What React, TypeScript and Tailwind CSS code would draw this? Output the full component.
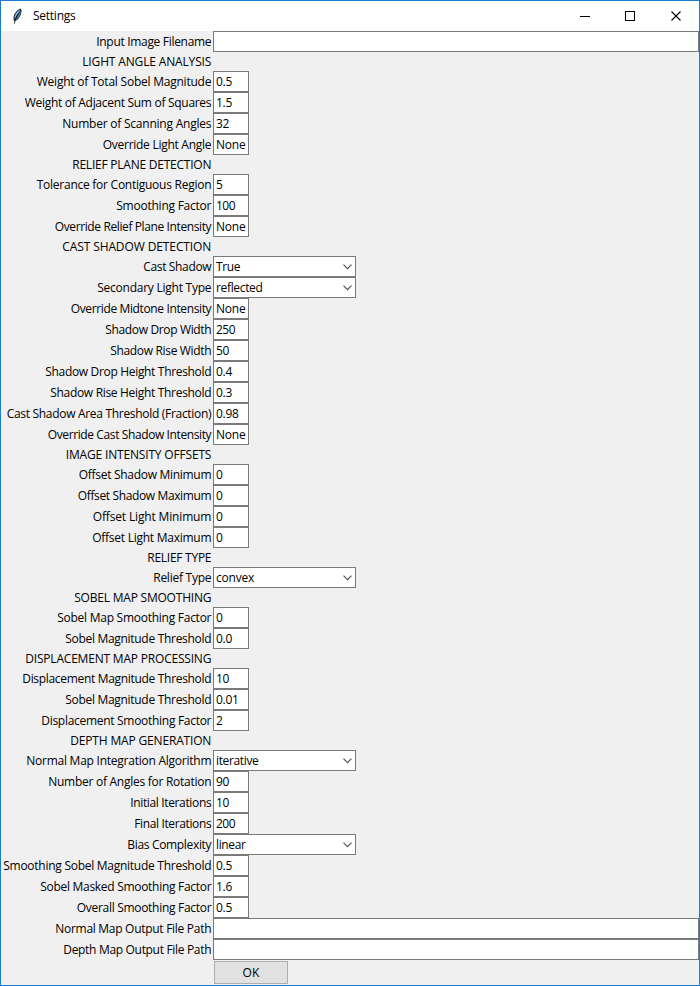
import { useLayoutEffect, useRef, useState } from "react";

type Kind = "heading" | "entry" | "select" | "path";
type Row = { kind: Kind; label: string; w: number; value?: string; vw?: number };

const rows: Row[] = [
  { kind: "path", label: "Input Image Filename", w: 115 },
  { kind: "heading", label: "LIGHT ANGLE ANALYSIS", w: 129 },
  { kind: "entry", label: "Weight of Total Sobel Magnitude", w: 174.5, value: "0.5", vw: 16 },
  { kind: "entry", label: "Weight of Adjacent Sum of Squares", w: 186.5, value: "1.5", vw: 16 },
  { kind: "entry", label: "Number of Scanning Angles", w: 149, value: "32", vw: 13 },
  { kind: "entry", label: "Override Light Angle", w: 108.5, value: "None", vw: 29.5 },
  { kind: "heading", label: "RELIEF PLANE DETECTION", w: 139 },
  { kind: "entry", label: "Tolerance for Contiguous Region", w: 174.5, value: "5", vw: 7 },
  { kind: "entry", label: "Smoothing Factor", w: 95, value: "100", vw: 19 },
  { kind: "entry", label: "Override Relief Plane Intensity", w: 156.5, value: "None", vw: 29.5 },
  { kind: "heading", label: "CAST SHADOW DETECTION", w: 149 },
  { kind: "select", label: "Cast Shadow", w: 68, value: "True", vw: 24 },
  { kind: "select", label: "Secondary Light Type", w: 114, value: "reflected", vw: 46.5 },
  { kind: "entry", label: "Override Midtone Intensity", w: 140.5, value: "None", vw: 29.5 },
  { kind: "entry", label: "Shadow Drop Width", w: 106, value: "250", vw: 19 },
  { kind: "entry", label: "Shadow Rise Width", w: 101, value: "50", vw: 13 },
  { kind: "entry", label: "Shadow Drop Height Threshold", w: 166, value: "0.4", vw: 16 },
  { kind: "entry", label: "Shadow Rise Height Threshold", w: 161, value: "0.3", vw: 16 },
  { kind: "entry", label: "Cast Shadow Area Threshold (Fraction)", w: 204.5, value: "0.98", vw: 22.5 },
  { kind: "entry", label: "Override Cast Shadow Intensity", w: 163.5, value: "None", vw: 29.5 },
  { kind: "heading", label: "IMAGE INTENSITY OFFSETS", w: 145.5 },
  { kind: "entry", label: "Offset Shadow Minimum", w: 132.5, value: "0", vw: 7 },
  { kind: "entry", label: "Offset Shadow Maximum", w: 133.5, value: "0", vw: 7 },
  { kind: "entry", label: "Offset Light Minimum", w: 118.5, value: "0", vw: 7 },
  { kind: "entry", label: "Offset Light Maximum", w: 119, value: "0", vw: 7 },
  { kind: "heading", label: "RELIEF TYPE", w: 64 },
  { kind: "select", label: "Relief Type", w: 58, value: "convex", vw: 38 },
  { kind: "heading", label: "SOBEL MAP SMOOTHING", w: 137 },
  { kind: "entry", label: "Sobel Map Smoothing Factor", w: 154, value: "0", vw: 7 },
  { kind: "entry", label: "Sobel Magnitude Threshold", w: 146, value: "0.0", vw: 16 },
  { kind: "heading", label: "DISPLACEMENT MAP PROCESSING", w: 186 },
  { kind: "entry", label: "Displacement Magnitude Threshold", w: 189, value: "10", vw: 13 },
  { kind: "entry", label: "Sobel Magnitude Threshold", w: 146, value: "0.01", vw: 22.5 },
  { kind: "entry", label: "Displacement Smoothing Factor", w: 170, value: "2", vw: 7 },
  { kind: "heading", label: "DEPTH MAP GENERATION", w: 141 },
  { kind: "select", label: "Normal Map Integration Algorithm", w: 185, value: "iterative", vw: 42.5 },
  { kind: "entry", label: "Number of Angles for Rotation", w: 163, value: "90", vw: 13 },
  { kind: "entry", label: "Initial Iterations", w: 81, value: "10", vw: 13 },
  { kind: "entry", label: "Final Iterations", w: 77, value: "200", vw: 19 },
  { kind: "select", label: "Bias Complexity", w: 84, value: "linear", vw: 29.5 },
  { kind: "entry", label: "Smoothing Sobel Magnitude Threshold", w: 208, value: "0.5", vw: 16 },
  { kind: "entry", label: "Sobel Masked Smoothing Factor", w: 171, value: "1.6", vw: 16 },
  { kind: "entry", label: "Overall Smoothing Factor", w: 134.5, value: "0.5", vw: 16 },
  { kind: "path", label: "Normal Map Output File Path", w: 156 },
  { kind: "path", label: "Depth Map Output File Path", w: 148 },
];

/** Text whose tracking is adjusted so that it occupies the given width. */
function Fit({ text, width }: { text: string; width: number }) {
  const ref = useRef<HTMLSpanElement>(null);
  const [spacing, setSpacing] = useState(0);
  useLayoutEffect(() => {
    if (!ref.current) return;
    const natural = ref.current.getBoundingClientRect().width - spacing * text.length;
    setSpacing((width - natural) / text.length);
  }, [text, width]);
  return (
    <span ref={ref} className="whitespace-pre" style={{ letterSpacing: `${spacing}px` }}>
      {text}
    </span>
  );
}

function Chevron() {
  return (
    <svg width="9" height="6" viewBox="0 0 9 6" className="mr-[3px] mt-px" fill="none" stroke="#555" strokeWidth="1.2">
      <path d="M0.5 0.7 L4.5 4.7 L8.5 0.7" />
    </svg>
  );
}

function Field({ row }: { row: Row }) {
  if (row.kind === "heading") return null;
  const size = row.kind === "path" ? "w-[486px]" : row.kind === "select" ? "w-[143px]" : "w-9";
  return (
    <div className={`${size} flex h-[21px] items-center border border-[#7a7a7a] bg-white pl-0.5 leading-[19px]`}>
      <div className="flex-1">{row.value && <Fit text={row.value} width={row.vw ?? 0} />}</div>
      {row.kind === "select" && <Chevron />}
    </div>
  );
}

function Feather() {
  return (
    <svg width="11" height="17" viewBox="0 0 11 17" className="shrink-0">
      <path d="M8.9 0.6 C5.8 1.4 2.8 4.6 1.7 8 L1.4 11.6 L2.7 13.2 C5.2 12.6 7.8 9.4 9 6 C9.7 3.8 9.7 1.8 8.9 0.6 Z" fill="#1c2a3a" />
      <path d="M8.3 1.6 C6 2.6 3.6 5.4 2.7 8.4 L2.4 11.2 C4.4 8.6 6.2 5.2 8.3 1.6 Z" fill="#8fc0f0" />
      <path d="M8.7 2.2 C7.4 5.6 5.6 9.2 3.5 11.8 C5.8 10.8 7.6 8 8.4 5.4 Z" fill="#4a8fd8" />
      <path d="M6.2 5.5 C4.4 8.5 2.8 11.6 2.5 15.6" fill="none" stroke="#111" strokeWidth="0.8" />
    </svg>
  );
}

export default function App() {
  return (
    <div className="flex h-[986px] w-[700px] flex-col overflow-hidden border border-[#1a7bcf] bg-[#f0f0f0] font-['Open_Sans','Noto_Sans',sans-serif] text-[12px] text-black">
      <header className="flex h-[30px] shrink-0 items-center bg-white pl-[11px]">
        <Feather />
        <div className="ml-[10px] flex-1 leading-[30px]">
          <Fit text="Settings" width={42.5} />
        </div>
        <svg width="102" height="12" viewBox="0 0 102 12" className="mr-[17px]" fill="none" stroke="#000" shapeRendering="crispEdges">
          <path d="M0 6.5 H10" />
          <rect x="45.5" y="1.5" width="9" height="9" />
          <path d="M91.5 1.5 L100.5 10.5 M100.5 1.5 L91.5 10.5" shapeRendering="auto" strokeWidth="1.1" />
        </svg>
      </header>
      <main className="flex flex-col">
        {rows.map((row, i) => (
          <div key={i} className={row.kind === "heading" ? "flex h-[19px] leading-[19px]" : "flex h-[21px] leading-[21px]"}>
            <div className="flex w-[212px] shrink-0 justify-end pr-[1.75px]">
              <Fit text={row.label} width={row.w} />
            </div>
            <Field row={row} />
          </div>
        ))}
        <button className="ml-[213px] mt-px flex h-[23px] w-[74px] items-center justify-center border border-[#adadad] bg-[#e1e1e1]">
          <Fit text="OK" width={17} />
        </button>
      </main>
    </div>
  );
}
